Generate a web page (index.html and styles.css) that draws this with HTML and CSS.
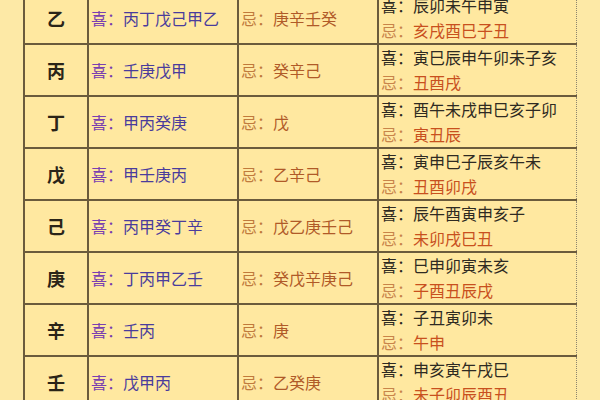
FILE: index.html
```html
<!DOCTYPE html>
<html lang="zh-CN">
<head>
<meta charset="utf-8">
<title>天干喜忌表</title>
<link rel="stylesheet" href="styles.css">
</head>
<body>
<div class="page">
<table class="gz">
  <tr>
    <td class="stem">乙</td>
    <td class="xi"><span class="lab">喜：</span>丙丁戊己甲乙</td>
    <td class="ji"><span class="lab">忌：</span>庚辛壬癸</td>
    <td class="br"><div class="l1"><span class="lab">喜：</span>辰卯未午申寅</div><div class="l2"><span class="lab">忌：</span>亥戌酉巳子丑</div></td>
  </tr>
  <tr>
    <td class="stem">丙</td>
    <td class="xi"><span class="lab">喜：</span>壬庚戊甲</td>
    <td class="ji"><span class="lab">忌：</span>癸辛己</td>
    <td class="br"><div class="l1"><span class="lab">喜：</span>寅巳辰申午卯未子亥</div><div class="l2"><span class="lab">忌：</span>丑酉戌</div></td>
  </tr>
  <tr>
    <td class="stem">丁</td>
    <td class="xi"><span class="lab">喜：</span>甲丙癸庚</td>
    <td class="ji"><span class="lab">忌：</span>戊</td>
    <td class="br"><div class="l1"><span class="lab">喜：</span>酉午未戌申巳亥子卯</div><div class="l2"><span class="lab">忌：</span>寅丑辰</div></td>
  </tr>
  <tr>
    <td class="stem">戊</td>
    <td class="xi"><span class="lab">喜：</span>甲壬庚丙</td>
    <td class="ji"><span class="lab">忌：</span>乙辛己</td>
    <td class="br"><div class="l1"><span class="lab">喜：</span>寅申巳子辰亥午未</div><div class="l2"><span class="lab">忌：</span>丑酉卯戌</div></td>
  </tr>
  <tr>
    <td class="stem">己</td>
    <td class="xi"><span class="lab">喜：</span>丙甲癸丁辛</td>
    <td class="ji"><span class="lab">忌：</span>戊乙庚壬己</td>
    <td class="br"><div class="l1"><span class="lab">喜：</span>辰午酉寅申亥子</div><div class="l2"><span class="lab">忌：</span>未卯戌巳丑</div></td>
  </tr>
  <tr>
    <td class="stem">庚</td>
    <td class="xi"><span class="lab">喜：</span>丁丙甲乙壬</td>
    <td class="ji"><span class="lab">忌：</span>癸戊辛庚己</td>
    <td class="br"><div class="l1"><span class="lab">喜：</span>巳申卯寅未亥</div><div class="l2"><span class="lab">忌：</span>子酉丑辰戌</div></td>
  </tr>
  <tr>
    <td class="stem">辛</td>
    <td class="xi"><span class="lab">喜：</span>壬丙</td>
    <td class="ji"><span class="lab">忌：</span>庚</td>
    <td class="br"><div class="l1"><span class="lab">喜：</span>子丑寅卯未</div><div class="l2"><span class="lab">忌：</span>午申</div></td>
  </tr>
  <tr>
    <td class="stem">壬</td>
    <td class="xi"><span class="lab">喜：</span>戊甲丙</td>
    <td class="ji"><span class="lab">忌：</span>乙癸庚</td>
    <td class="br"><div class="l1"><span class="lab">喜：</span>申亥寅午戌巳</div><div class="l2"><span class="lab">忌：</span>未子卯辰酉丑</div></td>
  </tr>
</table>
</div>
</body>
</html>
```
FILE: styles.css
```css
html, body {
  margin: 0;
  padding: 0;
  background: #fde9a6;
}
.page {
  width: 600px;
  height: 400px;
  overflow: hidden;
  padding-left: 23px;
  box-sizing: border-box;
}
.gz {
  border-collapse: collapse;
  margin-top: -9px;
  background: #ffe8a0;
  font-family: "Noto Sans CJK SC", sans-serif;
  font-size: 16px;
  line-height: 25px;
}
.gz td {
  border: 2px solid #6b5b3c;
  padding: 0 0 0 2px;
  height: 50px;
  box-sizing: border-box;
  vertical-align: middle;
  white-space: nowrap;
}
.gz td.stem {
  width: 64px;
  padding: 0;
  text-align: center;
  font-weight: bold;
  font-size: 18px;
  color: #2a2418;
}
.gz td.xi {
  width: 150px;
  color: #4a3c9c;
}
.gz td.xi .lab {
  color: #7a3fb0;
}
.gz td.ji {
  width: 140px;
  color: #b05a28;
}
.gz td.ji .lab {
  color: #c07a3c;
}
.gz td.br {
  width: 198px;
  border-right: 1px dotted #8c8470;
  color: #2e2a22;
}
.gz td.br .l1 .lab {
  color: #2e2a22;
}
.gz td.br .l2 {
  color: #c8501e;
}
.gz td.br .l2 .lab {
  color: #c8844a;
}
```
